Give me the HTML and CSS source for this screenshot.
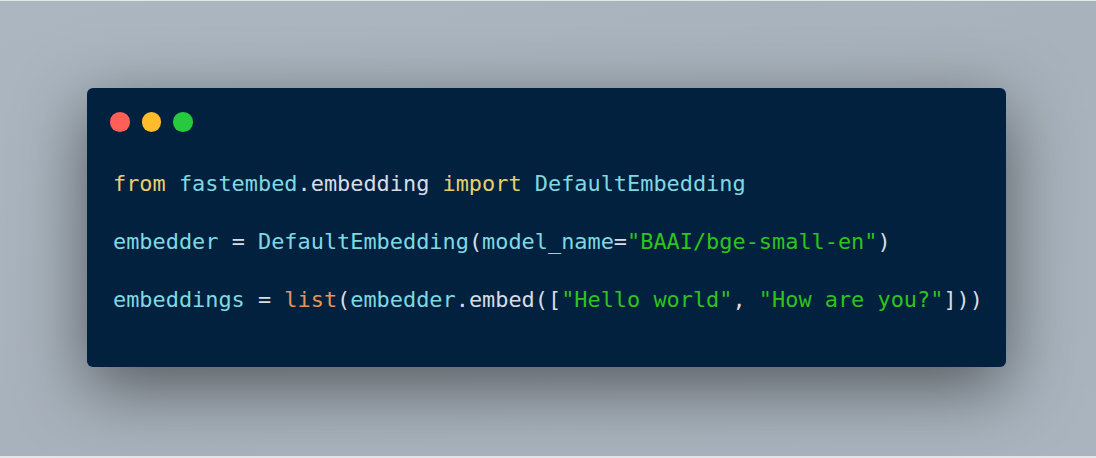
FILE: index.html
```html
<!DOCTYPE html>
<html>
<head>
<meta charset="utf-8">
<link rel="stylesheet" href="styles.css">
</head>
<body>
<div class="page">
  <div class="card">
    <div class="controls">
      <span class="dot red"></span>
      <span class="dot yellow"></span>
      <span class="dot green"></span>
    </div>
<pre class="code"><span class="kw">from</span> <span class="id">fastembed</span><span class="pl">.embedding</span> <span class="kw">import</span> <span class="id">DefaultEmbedding</span>

<span class="id">embedder</span> <span class="pl">=</span> <span class="id">DefaultEmbedding</span><span class="pl">(</span><span class="id">model_name</span><span class="pl">=</span><span class="str">"BAAI/bge-small-en"</span><span class="pl">)</span>

<span class="id">embeddings</span> <span class="pl">=</span> <span class="fn">list</span><span class="pl">(</span><span class="id">embedder</span><span class="pl">.embed([</span><span class="str">"Hello world"</span><span class="pl">,</span> <span class="str">"How are you?"</span><span class="pl">]))</span></pre>
  </div>
</div>
</body>
</html>
```

FILE: styles.css
```css
html, body {
  margin: 0;
  padding: 0;
}
body {
  width: 1096px;
  height: 458px;
  overflow: hidden;
  background: #e4e6e8;
}
.page {
  box-sizing: border-box;
  margin-top: 1px;
  height: 455px;
  background: linear-gradient(160deg, #abb6c0 0%, #a8b2bc 50%, #a9b4be 100%);
  padding: 87px 90px 0 87px;
}
.card {
  box-sizing: border-box;
  width: 919px;
  height: 279px;
  background: #01213f;
  border-radius: 6px;
  box-shadow: 0 20px 68px rgba(0, 0, 0, 0.5);
  padding: 24px 20px 0 23px;
}
.controls {
  display: flex;
  gap: 12px;
  height: 20px;
}
.dot {
  width: 19.5px;
  height: 19.5px;
  border-radius: 50%;
  display: block;
}
.red { background: #ff5f56; }
.yellow { background: #ffbd2e; }
.green { background: #27c93f; }
.code {
  margin: 37px 0 0 3px;
  font-family: "DejaVu Sans Mono", monospace;
  font-size: 21.9px;
  line-height: 29px;
  color: #d6dde6;
  white-space: pre;
}
.kw { color: #e6d06c; }
.id { color: #80d8e2; }
.pl { color: #d6dde6; }
.fn { color: #e8935a; }
.str { color: #2ec41a; }
```
